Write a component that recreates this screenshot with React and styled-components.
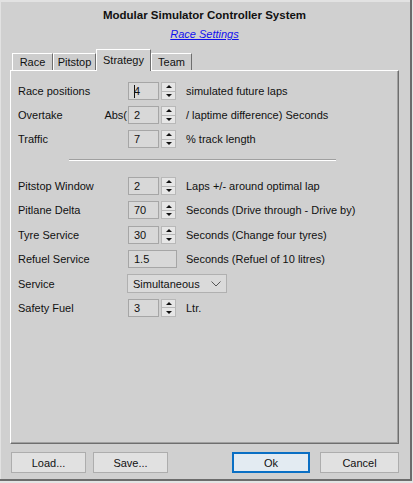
import React from "react";
import styled, { createGlobalStyle } from "styled-components";

const GlobalStyle = createGlobalStyle`
  html, body {
    margin: 0;
    padding: 0;
    background: #e4e4e4;
  }
  body {
    font-family: "Liberation Sans", Arial, sans-serif;
    font-size: 11px;
    color: #111;
  }
`;

const TABS = [
  { label: "Race", width: 41 },
  { label: "Pitstop", width: 43 },
  { label: "Strategy", width: 55, active: true },
  { label: "Team", width: 41 },
];

const Spinner = () => (
  <SpinBox>
    <SpinHalf>
      <ArrowUp />
    </SpinHalf>
    <SpinHalf>
      <ArrowDown />
    </SpinHalf>
  </SpinBox>
);

const NumberField = ({ value, caret }) => (
  <FieldGroup>
    <Input>
      {caret && <Caret />}
      {value}
    </Input>
    <Spinner />
  </FieldGroup>
);

const App = () => (
  <>
    <GlobalStyle />
    <Window>
      <Header>
        <Title>Modular Simulator Controller System</Title>
        <Link>Race Settings</Link>
      </Header>
      <TabStrip>
        {TABS.map((t) => (
          <Tab key={t.label} $width={t.width} $active={t.active}>
            {t.label}
          </Tab>
        ))}
      </TabStrip>
      <Panel>
        <Grid $gap={4}>
          <Label>Race positions</Label>
          <Prefix />
          <NumberField value="4" caret />
          <After>simulated future laps</After>

          <Label>Overtake</Label>
          <Prefix>Abs(</Prefix>
          <NumberField value="2" />
          <After>/ laptime difference) Seconds</After>

          <Label>Traffic</Label>
          <Prefix />
          <NumberField value="7" />
          <After>% track length</After>
        </Grid>
        <Separator />
        <Grid $gap={4.4}>
          <Label>Pitstop Window</Label>
          <Prefix />
          <NumberField value="2" />
          <After>Laps +/- around optimal lap</After>

          <Label>Pitlane Delta</Label>
          <Prefix />
          <NumberField value="70" />
          <After>Seconds (Drive through - Drive by)</After>

          <Label>Tyre Service</Label>
          <Prefix />
          <NumberField value="30" />
          <After>Seconds (Change four tyres)</After>

          <Label>Refuel Service</Label>
          <Prefix />
          <Input $wide>1.5</Input>
          <After>Seconds (Refuel of 10 litres)</After>

          <Label>Service</Label>
          <Prefix />
          <Select>
            <span>Simultaneous</span>
            <svg width="10" height="6" viewBox="0 0 10 6">
              <polyline
                points="0.5,0.5 5,5 9.5,0.5"
                fill="none"
                stroke="#555"
                strokeWidth="1"
              />
            </svg>
          </Select>

          <Label>Safety Fuel</Label>
          <Prefix />
          <NumberField value="3" />
          <After>Ltr.</After>
        </Grid>
      </Panel>
      <Footer>
        <Button>Load...</Button>
        <Button>Save...</Button>
        <Spacer />
        <Button $default $width={78}>
          Ok
        </Button>
        <Button $width={79}>Cancel</Button>
      </Footer>
    </Window>
  </>
);

const Window = styled.div`
  box-sizing: border-box;
  width: 412px;
  height: 481px;
  background: #d0d0d0;
  border-right: 2px solid #6c6c6c;
  border-bottom: 2px solid #6c6c6c;
  box-shadow: inset 2px 3px 0 -1px #e2e2e2;
  display: flex;
  flex-direction: column;
  padding: 0 11px 0 10px;
`;

const Header = styled.div`
  display: flex;
  flex-direction: column;
  align-items: center;
  padding-top: 8px;
  gap: 5px;
`;

const Title = styled.div`
  font-weight: bold;
  font-size: 11.5px;
  line-height: 14px;
  color: #111;
`;

const Link = styled.div`
  font-style: italic;
  text-decoration: underline;
  color: #1010ee;
  line-height: 14px;
`;

const TabStrip = styled.div`
  display: flex;
  align-items: flex-end;
  height: 21px;
  margin-top: 8px;
  padding-left: 2px;
`;

const Tab = styled.div`
  box-sizing: border-box;
  width: ${(p) => p.$width}px;
  height: ${(p) => (p.$active ? 22 : 17)}px;
  display: flex;
  align-items: ${(p) => (p.$active ? "flex-start" : "center")};
  justify-content: center;
  padding-top: ${(p) => (p.$active ? 4 : 1)}px;
  background: ${(p) => (p.$active ? "#d0d0d0" : "#cdcdcd")};
  border-top: 1px solid #fff;
  border-left: 1px solid #fff;
  border-right: 1px solid #6e6e6e;
  margin-bottom: ${(p) => (p.$active ? -1 : 0)}px;
  position: relative;
  z-index: ${(p) => (p.$active ? 1 : 0)};
  line-height: 13px;
`;

const Panel = styled.div`
  flex: 1;
  box-sizing: border-box;
  border-top: 1px solid #fff;
  border-left: 1px solid #fff;
  border-right: 1px solid #6e6e6e;
  border-bottom: 1px solid #6e6e6e;
  box-shadow: inset -1px -1px 0 #a0a0a0;
  padding: 10px 0 0 7px;
`;

const Grid = styled.div`
  display: grid;
  grid-template-columns: 84px 26px 49px 1fr;
  grid-auto-rows: 20px;
  row-gap: ${(p) => p.$gap}px;
  align-items: center;
`;

const Label = styled.div`
  white-space: nowrap;
  line-height: 14px;
`;

const Prefix = styled.div`
  text-align: right;
  padding-right: 1px;
  white-space: nowrap;
`;

const After = styled.div`
  padding-left: 9px;
  white-space: nowrap;
`;

const FieldGroup = styled.div`
  display: flex;
  align-items: center;
  gap: 2px;
`;

const Input = styled.div`
  box-sizing: border-box;
  width: ${(p) => (p.$wide ? 49 : 31)}px;
  height: 18px;
  background: #d8d8d8;
  border: 1px solid #a6a6a6;
  display: flex;
  align-items: center;
  padding-left: 5px;
  line-height: 14px;
`;

const Caret = styled.span`
  display: inline-block;
  width: 1px;
  height: 13px;
  background: #111;
  margin-right: -1px;
`;

const SpinBox = styled.div`
  box-sizing: border-box;
  width: 15px;
  height: 18px;
  border: 1px solid #b8b8b8;
  display: flex;
  flex-direction: column;
`;

const SpinHalf = styled.div`
  flex: 1;
  display: flex;
  align-items: center;
  justify-content: center;
  background: #e6e6e6;
  & + & {
    border-top: 1px solid #b8b8b8;
  }
`;

const ArrowUp = styled.span`
  width: 0;
  height: 0;
  border-left: 3px solid transparent;
  border-right: 3px solid transparent;
  border-bottom: 3px solid #111;
`;

const ArrowDown = styled.span`
  width: 0;
  height: 0;
  border-left: 3px solid transparent;
  border-right: 3px solid transparent;
  border-top: 3px solid #111;
`;

const Select = styled.div`
  grid-column: 3 / span 2;
  box-sizing: border-box;
  width: 100px;
  height: 19px;
  margin-left: -1px;
  background: #dadada;
  border: 1px solid #b0b0b0;
  display: flex;
  align-items: center;
  justify-content: space-between;
  padding: 0 5px 0 5px;
  svg {
    display: block;
  }
`;

const Separator = styled.div`
  width: 267px;
  height: 1px;
  margin: 10px 0 15px 51px;
  background: #a0a0a0;
  border-bottom: 1px solid #fff;
`;

const Footer = styled.div`
  height: 35px;
  display: flex;
  align-items: flex-start;
  padding: 8px 0 0 1px;
  gap: 7px;
  box-sizing: border-box;
`;

const Spacer = styled.div`
  flex: 1;
`;

const Button = styled.div`
  box-sizing: border-box;
  width: ${(p) => p.$width || 75}px;
  height: 21px;
  display: flex;
  align-items: center;
  justify-content: center;
  background: ${(p) => (p.$default ? "#e3ebf2" : "#e1e1e1")};
  border: ${(p) => (p.$default ? "2px solid #0a6fc4" : "1px solid #adadad")};
  margin-right: ${(p) => (p.$default ? 3 : 0)}px;
  color: #111;
`;

export default App;
